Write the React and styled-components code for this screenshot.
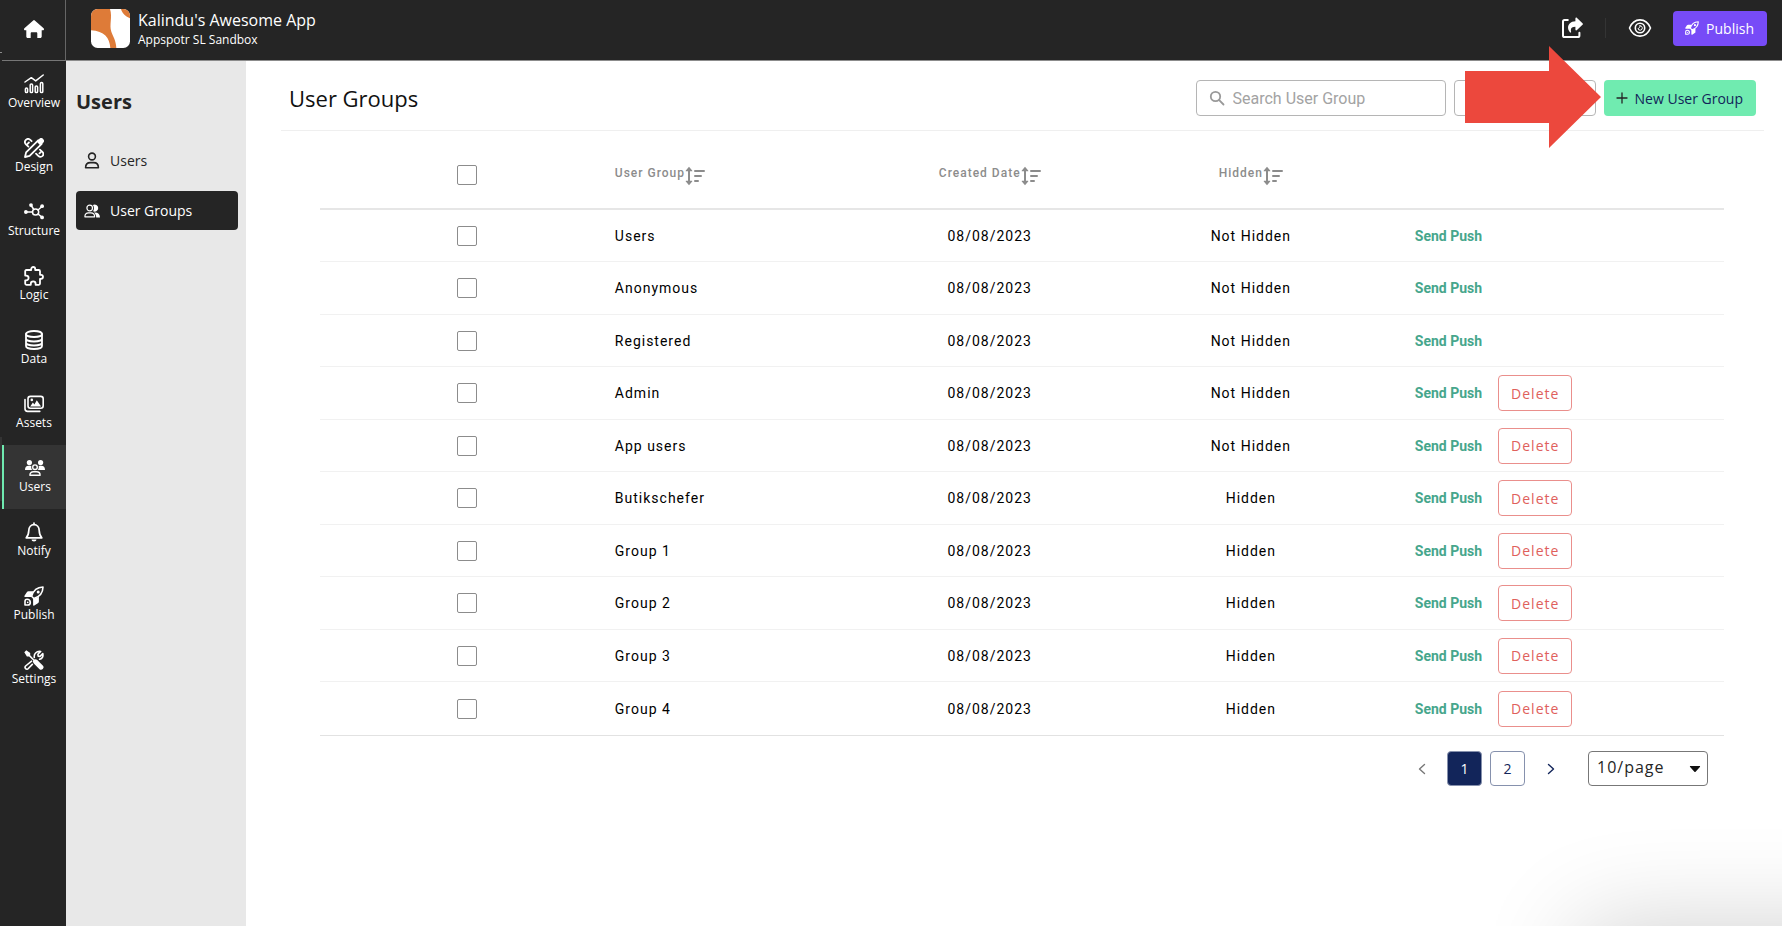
import React, { useState } from 'react';
import styled, { createGlobalStyle, css } from 'styled-components';

const sans = '"Open Sans", "Noto Sans", sans-serif';
const roboto = 'Roboto, "Noto Sans", sans-serif';

const GlobalStyle = createGlobalStyle`
  *, *::before, *::after {
    box-sizing: border-box;
  }

  body {
    margin: 0;
    background: #fff;
    color: #111;
    font-family: ${sans};
  }

  button, input, select {
    font: inherit;
    margin: 0;
  }

  button {
    cursor: pointer;
  }
`;

/* ---------- icons ---------- */

const Icon = styled.svg.attrs({ 'aria-hidden': true })`
  display: block;
  flex: none;
  width: ${p => p.$w || 20}px;
  height: ${p => p.$h || p.$w || 20}px;
  fill: none;
  stroke: currentColor;
  stroke-width: ${p => p.$stroke || 1.6};
  stroke-linecap: round;
  stroke-linejoin: round;

  .solid {
    fill: currentColor;
    stroke: none;
  }
`;

const HomeIcon = () => (
  <Icon viewBox="0 0 20 20">
    <path className="solid" d="M9.2 1.4a1.2 1.2 0 0 1 1.6 0l8.8 7.9c.8.8.3 1.9-.7 1.9h-1.2v6.2c0 .9-.6 1.5-1.5 1.5h-2.9v-4.6c0-.7-.4-1.1-1.1-1.1H7.8c-.7 0-1.1.4-1.1 1.1v4.6H3.8c-.9 0-1.5-.6-1.5-1.5v-6.2H1.1c-1 0-1.5-1.1-.7-1.9z" />
  </Icon>
);

const OverviewIcon = () => (
  <Icon viewBox="0 0 20 20" $stroke={1.5}>
    <path d="M1 8l6.3-4.3 4.4 3.2L19.2 1" />
    <rect x="1.4" y="14" width="2.2" height="4.6" rx="1.1" />
    <rect x="6.2" y="10" width="2.4" height="8.6" rx="1.1" />
    <rect x="11.2" y="12" width="2.4" height="6.6" rx="1.1" />
    <rect x="16.4" y="8.6" width="2.4" height="10" rx="1.1" />
  </Icon>
);

const DesignIcon = () => (
  <Icon viewBox="0 0 20 20" $stroke={1.8}>
    <path d="M1 19l1.1-4.6L14.2 2.3l3.5 3.5L5.6 17.9z" />
    <path className="solid" d="M12.6 3.6l2.6-2.7a2.7 2.7 0 0 1 3.9 3.9l-2.7 2.6z" />
    <path d="M7.6 3.2L6.3 1.9C5 .7 3 .8 1.900 1.900S.7 5 1.900 6.300L4.400 8.600M4.900 4.500L3.600 5.800" />
    <path d="M12 15.600l2.300 2.300c1.300 1.300 3.200 1.200 4.200.1s1.100-2.900-.1-4.100L15.900 11.600M15.500 15.400l1.200-1.200" />
  </Icon>
);

const StructureIcon = () => (
  <Icon viewBox="0 0 20 20" $stroke={1.5}>
    <circle cx="11.6" cy="10" r="3.1" />
    <path d="M2 10h6.500M7.200 3.500l2.600 4M14 8l4-3.500M14 12l4 3.200" />
    <circle className="solid" cx="1.9" cy="10" r="1.9" />
    <circle className="solid" cx="7" cy="3.100" r="1.9" />
    <circle className="solid" cx="18.100" cy="4.200" r="1.9" />
    <circle className="solid" cx="18.100" cy="15.400" r="1.9" />
  </Icon>
);

const LogicIcon = () => (
  <Icon viewBox="0 0 20 20" $stroke={1.8}>
    <path d="M7.200 4V3a2 2 0 0 1 4 0v1h3.600c.8 0 1.200.4 1.200 1.200v3.600h1a2 2 0 0 1 0 4h-1v4.800c0 .8-.4 1.200-1.200 1.200h-3.200v-1a2.400 2.400 0 0 0-4.800 0v1H2.400c-.8 0-1.200-.4-1.200-1.200v-3.200h1a2.400 2.400 0 0 0 0-4.800h-1V5.200c0-.8.4-1.200 1.200-1.200z" />
  </Icon>
);

const DataIcon = () => (
  <Icon viewBox="0 0 20 20" $stroke={1.8}>
    <ellipse cx="10" cy="4" rx="8" ry="3" />
    <path d="M2 4v12c0 1.700 3.600 3 8 3s8-1.300 8-3V4M2 8.500c0 1.700 3.600 3 8 3s8-1.300 8-3M2 12.500c0 1.700 3.600 3 8 3s8-1.300 8-3" />
  </Icon>
);

const AssetsIcon = () => (
  <Icon viewBox="0 0 20 20">
    <rect x="4" y="2.4" width="15.2" height="11.8" rx="2.4" />
    <path d="M1 5.600v9.200c0 1.600 1 2.600 2.600 2.600h12.200" />
    <path className="solid" d="M6.200 12.600l2.700-4 1.500 1.900 2.400-4.300 4.300 6.400z" />
    <circle className="solid" cx="7.8" cy="5.9" r="1.300" />
  </Icon>
);

const TeamIcon = () => (
  <Icon viewBox="0 0 20 20" $stroke={1.4}>
    <circle className="solid" cx="4.4" cy="4.6" r="2.6" />
    <circle className="solid" cx="15.6" cy="4.6" r="2.6" />
    <path className="solid" d="M0 12c0-2.800 1.400-4.200 3.600-4.200h1.800l1 .5c-.5 1.600 0 2.700.9 3.700zM20 12c0-2.800-1.400-4.200-3.600-4.200h-1.800l-1 .5c.5 1.600 0 2.700-.9 3.700z" />
    <circle cx="10" cy="9.2" r="2.3" />
    <path d="M4.900 17.200c0-2.200 1.300-3.400 3.500-3.400h3.200c2.200 0 3.500 1.200 3.500 3.400z" />
  </Icon>
);

const BellIcon = () => (
  <Icon viewBox="0 0 20 20" $stroke={1.7}>
    <path d="M10 1v1.400M2.200 15.800c2.300-2.300 2.500-4.600 2.600-7.300.1-3.500 2.300-5.900 5.200-5.900s5.100 2.400 5.200 5.900c.1 2.700.3 5 2.600 7.300z" />
    <path className="solid" d="M7.500 17.600h5a2.500 2 0 0 1-5 0z" />
  </Icon>
);

const RocketIcon = ({ size = 20 }) => (
  <Icon viewBox="0 0 20 20" $w={size}>
    <path d="M7.600 10.300C9 5.400 12.800 1.200 19 1c-.1 6.200-4.300 10.100-9.200 11.500z" />
    <circle className="solid" cx="14.2" cy="5.9" r="1.5" />
    <path className="solid" d="M9.400 5.200L7.100 11H1c-.7 0-.9-.6-.5-1.200L2.800 6.200c.4-.7.900-1 1.700-1zM14.900 10.700L9.100 13v6.100c0 .7.600.9 1.200.5l3.600-2.300c.7-.4 1-.9 1-1.700z" />
    <path d="M1 19v-3.600c0-1.400.9-2.200 2.100-2.200 1.700 0 3.200 1.400 3.200 3.200 0 1.700-1.100 2.600-2.600 2.600z" />
    <circle className="solid" cx="3.7" cy="16.4" r=".8" />
  </Icon>
);

const SettingsIcon = () => (
  <Icon viewBox="0 0 20 20">
    <path className="solid" d="M.3 2.300L2.300.3l3.900 2.600v2.400l4.100 4.100c1-.4 2.200-.2 3 .6l5.700 5.700a2.500 2.500 0 0 1-3.500 3.500l-5.700-5.700c-.8-.8-1-2-.6-3L5.100 6.400H2.900z" />
    <path d="M10.300 7.500c-.6-3.400 1.900-6.600 6.400-6l-2.800 2.800.3 1.800 1.800.3 2.800-2.800c.6 3.100-.9 5.100-3.200 5.700" />
    <path d="M7.600 11.200L1.600 16c-1.600 1.800.9 4.300 2.500 2.700l4.200-4.300" />
  </Icon>
);

const UserIcon = () => (
  <Icon viewBox="0 0 16 17" $w={16} $h={17}>
    <circle cx="8" cy="4.5" r="3.4" />
    <path d="M1.600 15.700c0-3.200 1.900-5.100 4.800-5.100h3.200c2.900 0 4.800 1.900 4.800 5.100z" />
  </Icon>
);

const GroupIcon = () => (
  <Icon viewBox="0 0 16 16" $w={16} $stroke={1.2}>
    <circle cx="5.700" cy="5" r="2.8" />
    <path d="M.9 13.800c0-2.500 1.500-3.900 3.700-3.900h2.300c2.200 0 3.700 1.400 3.700 3.900z" />
    <path className="solid" d="M8.900 1.900a3.600 3.600 0 1 1 .2 6.400c1.200-2 1.200-4.500-.2-6.400zM11 9.400c3 0 4.900 1.800 5 5h-3.800c0-2-.8-3.700-2.200-4.900z" />
  </Icon>
);

const ShareIcon = () => (
  <Icon viewBox="0 0 22 22" $w={22} $stroke={2}>
    <path d="M6.800 3H3.500C2.400 3 2 3.600 2 4.600v13.800c0 1 .6 1.600 1.600 1.600h13.200c1 0 1.600-.6 1.600-1.600v-2.600" />
    <path className="solid" d="M14.400 1.600c0-1 .9-1.300 1.600-.7l5.500 5.300c.6.500.6 1.100 0 1.600L16 13.100c-.7.600-1.600.3-1.600-.7V9.800c-3.600 0-5.200 1.500-4.300 4.900.2.800-.6 1.200-1.200.6-3.900-4.500-1.500-10.900 5.500-11.100z" />
  </Icon>
);

const EyeIcon = () => (
  <Icon viewBox="0 0 24 20" $w={24} $h={20} $stroke={1.6}>
    <path d="M1.500 10C3.600 5 7.400 1.900 12 1.900S20.400 5 22.500 10c-2.100 5-5.900 8.100-10.500 8.100S3.600 15 1.500 10z" />
    <circle cx="12" cy="10" r="4.700" />
    <path d="M12 7.800a2.200 2.200 0 1 1-2 2.700c1.200-.1 2-1.300 2-2.700z" strokeWidth="1" />
  </Icon>
);

const SearchIcon = () => (
  <Icon viewBox="0 0 16 16" $w={16} $stroke={1.8}>
    <circle cx="6.5" cy="6.5" r="4.7" />
    <path d="M10.200 10.200l4.300 4.300" />
  </Icon>
);

const PlusIcon = () => (
  <Icon viewBox="0 0 12 12" $w={12} $stroke={1.3}>
    <path d="M6 1v10M1 6h10" />
  </Icon>
);

const SortIcon = () => (
  <Icon viewBox="0 0 20 20" $w={20} $stroke={2}>
    <path d="M4 4v12M10 5h9M10 10h6M10 15h3" />
    <path className="solid" d="M4 .8l3.200 3.600c.3.600 0 .9-.5.900H1.300c-.5 0-.8-.3-.5-.9zM4 19.200l3.200-3.600c.3-.6 0-.9-.5-.9H1.300c-.5 0-.8.3-.5.900z" />
  </Icon>
);

const Chevron = ({ flip }) => (
  <Icon viewBox="0 0 12 12" $w={12} $stroke={1.4}>
    <path d={flip ? 'M8.500 1.500L3.500 6l5 4.500' : 'M3.500 1.500L8.500 6l-5 4.500'} />
  </Icon>
);

/* ---------- shell ---------- */

const Shell = styled.div`
  display: flex;
  min-height: 100vh;
`;

const Strip = styled.div`
  flex: none;
  width: 2px;
  padding-top: 52px;
  background: #252525;

  &::before {
    content: '';
    display: block;
    height: 1px;
    background: #8c8c8c;
  }

  &::after {
    content: '';
    display: block;
    height: 64px;
    margin-top: 384px;
    background: #343434;
  }
`;

const Rail = styled.nav`
  flex: none;
  width: 64px;
  display: flex;
  flex-direction: column;
  background: #252525;
  color: #fff;
`;

const HomeLink = styled.a`
  display: flex;
  align-items: center;
  justify-content: center;
  height: 61px;
  padding-bottom: 2px;
  color: #fff;
  border-right: 1px solid #666;
  border-bottom: 1px solid #777;
`;

const RailLink = styled.a`
  display: flex;
  flex-direction: column;
  align-items: center;
  height: 64px;
  padding-top: 13px;
  color: #fff;
  font-size: 12px;
  line-height: 18px;
  text-decoration: none;

  ${p => p.$active && css`
    background: #343434;
    border-left: 2px solid #6feab0;
  `}
`;

const Page = styled.div`
  flex: 1;
  min-width: 0;
  display: flex;
  flex-direction: column;
`;

const TopBar = styled.header`
  display: flex;
  align-items: center;
  height: 61px;
  padding: 0 15px 4px 25px;
  background: #252525;
  border-bottom: 1px solid #8c8c8c;
  color: #fff;
`;

const AppInfo = styled.div`
  margin-left: 8px;
  padding-top: 4px;
`;

const AppName = styled.div`
  font-size: 16px;
  line-height: 20px;
`;

const AppOwner = styled.div`
  font-size: 12px;
  line-height: 20px;
`;

const TopActions = styled.div`
  display: flex;
  align-items: center;
  margin-left: auto;
`;

const IconButton = styled.button`
  display: flex;
  align-items: center;
  padding: 0;
  border: 0;
  background: none;
  color: #fff;
`;

const Divider = styled.span`
  width: 1px;
  height: 20px;
  margin: 0 22px;
  background: #343434;
`;

const PublishButton = styled.button`
  display: flex;
  align-items: center;
  gap: 7px;
  height: 35px;
  margin-left: 21px;
  padding: 0 13px 0 12px;
  border: 0;
  border-radius: 4px;
  background: #774bf7;
  color: #fff;
  font-size: 14px;
`;

const Body = styled.div`
  flex: 1;
  display: flex;
`;

const Sidebar = styled.aside`
  flex: none;
  width: 180px;
  padding: 25px 8px 0 10px;
  background: #e8e8e8;
`;

const SidebarTitle = styled.h2`
  margin: 0 0 23px;
  color: #252525;
  font-size: 20px;
  font-weight: 700;
  line-height: 32px;
`;

const SideLink = styled.a`
  display: flex;
  align-items: center;
  gap: 10px;
  height: 39px;
  margin-bottom: 11px;
  padding-left: 8px;
  border-radius: 4px;
  font-size: 14px;
  text-decoration: none;
  color: ${p => (p.$active ? '#fff' : '#252525')};
  background: ${p => (p.$active ? '#252525' : 'transparent')};
`;

/* ---------- main ---------- */

const Main = styled.main`
  flex: 1;
  min-width: 0;
`;

const Toolbar = styled.div`
  display: flex;
  align-items: center;
  margin: 0 18px 0 35px;
  padding: 19px 8px 14px;
  border-bottom: 1px solid #efefef;
`;

const Title = styled.h1`
  margin: 0;
  color: #111;
  font-size: 22px;
  font-weight: 400;
  line-height: 36px;
`;

const Tools = styled.div`
  position: relative;
  display: flex;
  gap: 8px;
  margin-left: auto;
`;

const SearchBox = styled.label`
  display: flex;
  align-items: center;
  gap: 8px;
  width: 250px;
  height: 36px;
  padding: 0 12px;
  border: 1px solid #b5b5b5;
  border-radius: 4px;
  color: #999;

  input {
    flex: 1;
    min-width: 0;
    padding: 0;
    border: 0;
    outline: 0;
    background: none;
    font-family: ${roboto};
    font-size: 16px;
  }

  input::placeholder {
    color: #a3a3a3;
    opacity: 1;
  }
`;

const FilterButton = styled.button`
  width: 142px;
  height: 36px;
  border: 1px solid #b5b5b5;
  border-radius: 4px;
  background: #fff;
`;

const NewButton = styled.button`
  display: flex;
  align-items: center;
  gap: 7px;
  height: 36px;
  padding: 0 13px 0 12px;
  border: 0;
  border-radius: 4px;
  background: #70ebb0;
  color: #12255a;
  font-size: 14px;

  svg {
    color: #252525;
  }
`;

const Pointer = styled.svg`
  position: absolute;
  top: -34px;
  right: 155px;
  width: 136px;
  height: 102px;
  fill: #ec483d;
  pointer-events: none;
`;

const Content = styled.section`
  padding: 0 58px 0 74px;
`;

const Table = styled.table`
  width: 100%;
  table-layout: fixed;
  border-collapse: separate;
  border-spacing: 0;
  border-bottom: 1px solid #e2e2e2;
  font-family: ${roboto};
  letter-spacing: 1px;

  th {
    height: 79px;
    padding: 10px 0 0;
    border-bottom: 2px solid #e6e6e6;
    color: #8c8c8c;
    font-size: 12px;
    font-weight: 500;
    line-height: 20px;
  }

  td {
    height: 52px;
    padding: 0;
    border-bottom: 1px solid #f1f1f1;
    color: #000;
    font-size: 14px;
    font-weight: 400;
    text-align: center;
  }

  tbody tr:nth-child(even) td {
    height: 53px;
  }

  td:nth-child(2) {
    text-align: left;
  }

  td:last-child {
    padding-left: 32px;
  }

  tbody tr:last-child td {
    border-bottom: 0;
  }
`;

const SortButton = styled.button`
  display: flex;
  align-items: flex-start;
  justify-content: ${p => (p.$left ? 'flex-start' : 'center')};
  width: 100%;
  padding: 0;
  border: 0;
  background: none;
  color: inherit;
  letter-spacing: inherit;

  svg {
    margin-top: 3px;
  }
`;

const CheckBox = styled.input.attrs({ type: 'checkbox' })`
  appearance: none;
  display: block;
  width: 20px;
  height: 20px;
  margin: 0 auto;
  border: 1px solid #8c8c8c;
  border-radius: 2px;
  background: #fff;

  &:checked {
    background: #12255a;
  }
`;

const RowActions = styled.div`
  display: flex;
  align-items: center;
  gap: 16px;
`;

const PushLink = styled.a`
  color: #46a68c;
  font-size: 14px;
  font-weight: 700;
  letter-spacing: 0;
  text-decoration: none;
`;

const DeleteButton = styled.button`
  height: 36px;
  padding: 0 12px;
  border: 1px solid #ea8f8c;
  border-radius: 4px;
  background: #fff;
  color: #e0605c;
  font-family: ${sans};
  font-size: 14px;
  font-weight: 400;
  letter-spacing: 1px;
`;

const Pager = styled.nav`
  display: flex;
  align-items: center;
  justify-content: flex-end;
  gap: 8px;
  padding: 15px 16px 0 0;
`;

const PageButton = styled.button`
  display: flex;
  align-items: center;
  justify-content: center;
  width: 35px;
  height: 35px;
  padding: 0;
  border: 1px solid ${p => (p.$arrow ? 'transparent' : '#8691ad')};
  border-radius: 4px;
  background: ${p => (p.$active ? '#12255a' : 'transparent')};
  color: ${p => (p.$active ? '#fff' : '#12255a')};
  font-size: 14px;

  &:disabled {
    color: #777;
  }
`;

const SizeSelect = styled.span`
  position: relative;
  width: 120px;
  height: 35px;
  margin-left: 12px;

  select {
    appearance: none;
    width: 100%;
    height: 100%;
    padding: 0 8px 4px;
    border: 1px solid #777;
    border-radius: 4px;
    background: #fff;
    color: #252525;
    font-size: 16px;
    letter-spacing: 1px;
  }

  svg {
    position: absolute;
    right: 7px;
    top: 14px;
    pointer-events: none;
  }
`;

const WidgetShadow = styled.div`
  position: fixed;
  right: -200px;
  bottom: -200px;
  width: 402px;
  height: 200px;
  box-shadow: 0 0 100px rgba(0, 0, 0, 0.19);
  pointer-events: none;
`;

const railItems = [
  { label: 'Overview', icon: <OverviewIcon /> },
  { label: 'Design', icon: <DesignIcon /> },
  { label: 'Structure', icon: <StructureIcon /> },
  { label: 'Logic', icon: <LogicIcon /> },
  { label: 'Data', icon: <DataIcon /> },
  { label: 'Assets', icon: <AssetsIcon /> },
  { label: 'Users', icon: <TeamIcon /> },
  { label: 'Notify', icon: <BellIcon /> },
  { label: 'Publish', icon: <RocketIcon /> },
  { label: 'Settings', icon: <SettingsIcon /> },
];

const groups = [
  { name: 'Users', hidden: false, locked: true },
  { name: 'Anonymous', hidden: false, locked: true },
  { name: 'Registered', hidden: false, locked: true },
  { name: 'Admin', hidden: false },
  { name: 'App users', hidden: false },
  { name: 'Butikschefer', hidden: true },
  { name: 'Group 1', hidden: true },
  { name: 'Group 2', hidden: true },
  { name: 'Group 3', hidden: true },
  { name: 'Group 4', hidden: true },
];

const AppLogo = () => (
  <svg width="39" height="39" viewBox="0 0 117 117" aria-hidden="true">
    <defs>
      <clipPath id="logo-clip"><rect width="117" height="117" rx="20" /></clipPath>
    </defs>
    <g clipPath="url(#logo-clip)">
      <rect width="117" height="117" fill="#fff" />
      <path fill="#de7b38" d="M0 0h57c8 24-3 48 4 68 5 14 14 26 15 49H58C56 86 40 67 0 64z" />
      <path fill="#de7b38" d="M90 0c4 14 14 22 27 28V0z" />
    </g>
  </svg>
);

const GroupRow = ({ group }) => (
  <tr>
    <td><CheckBox aria-label={`Select ${group.name}`} /></td>
    <td>{group.name}</td>
    <td>08/08/2023</td>
    <td>{group.hidden ? 'Hidden' : 'Not Hidden'}</td>
    <td>
      <RowActions>
        <PushLink href="#push">Send Push</PushLink>
        {!group.locked && <DeleteButton type="button">Delete</DeleteButton>}
      </RowActions>
    </td>
  </tr>
);

const App = () => {
  const [search, setSearch] = useState('');

  return (
    <>
      <GlobalStyle />
      <Shell>
        <Strip />
        <Rail aria-label="Main">
          <HomeLink href="#home" aria-label="Home"><HomeIcon /></HomeLink>
          {railItems.map(item => (
            <RailLink key={item.label} href={`#${item.label}`} $active={item.label === 'Users'}>
              {item.icon}
              {item.label}
            </RailLink>
          ))}
        </Rail>
        <Page>
          <TopBar>
            <AppLogo />
            <AppInfo>
              <AppName>Kalindu's Awesome App</AppName>
              <AppOwner>Appspotr SL Sandbox</AppOwner>
            </AppInfo>
            <TopActions>
              <IconButton type="button" aria-label="Share"><ShareIcon /></IconButton>
              <Divider />
              <IconButton type="button" aria-label="Preview"><EyeIcon /></IconButton>
              <PublishButton type="button"><RocketIcon size={14} />Publish</PublishButton>
            </TopActions>
          </TopBar>
          <Body>
            <Sidebar>
              <SidebarTitle>Users</SidebarTitle>
              <SideLink href="#users"><UserIcon />Users</SideLink>
              <SideLink href="#groups" $active><GroupIcon />User Groups</SideLink>
            </Sidebar>
            <Main>
              <Toolbar>
                <Title>User Groups</Title>
                <Tools>
                  <SearchBox>
                    <SearchIcon />
                    <input
                      aria-label="Search User Group"
                      placeholder="Search User Group"
                      value={search}
                      onChange={e => setSearch(e.target.value)}
                    />
                  </SearchBox>
                  <FilterButton type="button" aria-label="Filter" />
                  <NewButton type="button"><PlusIcon />New User Group</NewButton>
                  <Pointer viewBox="0 0 136 102" aria-hidden="true">
                    <path d="M0 25h84V0l52 51-52 51V77H0z" />
                  </Pointer>
                </Tools>
              </Toolbar>
              <Content>
                <Table>
                  <colgroup>
                    <col style={{ width: '21%' }} />
                    <col style={{ width: '17.5%' }} />
                    <col style={{ width: '18.4%' }} />
                    <col style={{ width: '18.8%' }} />
                    <col />
                  </colgroup>
                  <thead>
                    <tr>
                      <th><CheckBox aria-label="Select all" /></th>
                      <th><SortButton type="button" $left>User Group<SortIcon /></SortButton></th>
                      <th><SortButton type="button">Created Date<SortIcon /></SortButton></th>
                      <th><SortButton type="button">Hidden<SortIcon /></SortButton></th>
                      <th aria-label="Actions" />
                    </tr>
                  </thead>
                  <tbody>
                    {groups.map(group => <GroupRow key={group.name} group={group} />)}
                  </tbody>
                </Table>
                <Pager aria-label="Pages">
                  <PageButton type="button" $arrow disabled aria-label="Previous page"><Chevron flip /></PageButton>
                  <PageButton type="button" $active>1</PageButton>
                  <PageButton type="button">2</PageButton>
                  <PageButton type="button" $arrow aria-label="Next page"><Chevron /></PageButton>
                  <SizeSelect>
                    <select aria-label="Rows per page" defaultValue="10">
                      <option value="10">10/page</option>
                      <option value="20">20/page</option>
                    </select>
                    <Icon viewBox="0 0 12 8" $w={12} $h={8}>
                      <path className="solid" d="M1.500 1h9c.6 0 .8.600.4 1L6.600 6.700c-.4.400-.8.400-1.200 0L1.100 2c-.4-.4-.2-1 .4-1z" />
                    </Icon>
                  </SizeSelect>
                </Pager>
              </Content>
            </Main>
          </Body>
        </Page>
      </Shell>
      <WidgetShadow />
    </>
  );
};

export default App;
